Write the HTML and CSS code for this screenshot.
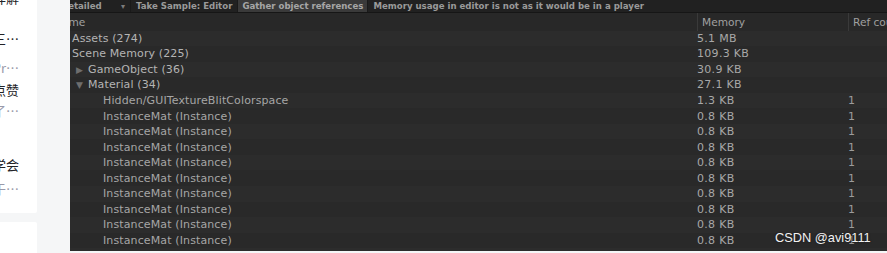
FILE: index.html
```html
<!DOCTYPE html>
<html lang="zh">
<head>
    <meta charset="UTF-8">
    <title>Memory Profiler</title>
    <link rel="stylesheet" href="styles.css">
</head>
<body>
<div class="side">
    <div class="card">
        <div class="line title top">Unity 内存分析 详解</div>
        <div class="line title l1">Profiler 使用方法三…</div>
        <div class="line desc l2">Unity Memory Pr…</div>
        <div class="line title l3">阅读 1204 点赞</div>
        <div class="line desc l4">材料实例化导致了…</div>
        <div class="line title l5">推荐相关内容 学会</div>
        <div class="line desc l6">如何减少材质实例对于…</div>
    </div>
    <div class="card bottom"></div>
</div>
<div class="panel">
    <div class="toolbar">
        <div class="tool dropdown">Detailed <span class="caret">▾</span></div>
        <div class="tool">Take Sample: Editor</div>
        <div class="tool active">Gather object references</div>
        <div class="tool note">Memory usage in editor is not as it would be in a player</div>
    </div>
    <div class="head">
        <div class="col name"><span class="cut">Name</span></div>
        <div class="col mem">Memory</div>
        <div class="col ref">Ref count</div>
    </div>
    <div class="rows">
        <div class="row"><div class="col name lv0">Assets (274)</div><div class="col mem">5.1 MB</div><div class="col ref"></div></div>
        <div class="row"><div class="col name lv0">Scene Memory (225)</div><div class="col mem">109.3 KB</div><div class="col ref"></div></div>
        <div class="row"><div class="col name lv1"><span class="arrow">▶</span>GameObject (36)</div><div class="col mem">30.9 KB</div><div class="col ref"></div></div>
        <div class="row"><div class="col name lv1"><span class="arrow">▼</span>Material (34)</div><div class="col mem">27.1 KB</div><div class="col ref"></div></div>
        <div class="row"><div class="col name lv2">Hidden/GUITextureBlitColorspace</div><div class="col mem">1.3 KB</div><div class="col ref">1</div></div>
        <div class="row"><div class="col name lv2">InstanceMat (Instance)</div><div class="col mem">0.8 KB</div><div class="col ref">1</div></div>
        <div class="row"><div class="col name lv2">InstanceMat (Instance)</div><div class="col mem">0.8 KB</div><div class="col ref">1</div></div>
        <div class="row"><div class="col name lv2">InstanceMat (Instance)</div><div class="col mem">0.8 KB</div><div class="col ref">1</div></div>
        <div class="row"><div class="col name lv2">InstanceMat (Instance)</div><div class="col mem">0.8 KB</div><div class="col ref">1</div></div>
        <div class="row"><div class="col name lv2">InstanceMat (Instance)</div><div class="col mem">0.8 KB</div><div class="col ref">1</div></div>
        <div class="row"><div class="col name lv2">InstanceMat (Instance)</div><div class="col mem">0.8 KB</div><div class="col ref">1</div></div>
        <div class="row"><div class="col name lv2">InstanceMat (Instance)</div><div class="col mem">0.8 KB</div><div class="col ref">1</div></div>
        <div class="row"><div class="col name lv2">InstanceMat (Instance)</div><div class="col mem">0.8 KB</div><div class="col ref">1</div></div>
        <div class="row"><div class="col name lv2">InstanceMat (Instance)</div><div class="col mem">0.8 KB</div><div class="col ref">1</div></div>
        <div class="row"><div class="col name lv2">InstanceMat (Instance)</div><div class="col mem">0.8 KB</div><div class="col ref">1</div></div>
    </div>
    <div class="watermark">CSDN @avi9111</div>
</div>
</body>
</html>
```

FILE: styles.css
```css
* {
    box-sizing: border-box;
}

html, body {
    margin: 0;
    padding: 0;
}

body {
    display: flex;
    height: 253px;
    overflow: hidden;
    background: #f5f6f7;
    font-family: "DejaVu Sans", "Noto Sans", sans-serif;
}

/* left: clipped blog sidebar */
.side {
    width: 37px;
    margin-right: 33px;
    display: flex;
    flex-flow: column nowrap;
    gap: 9px;
}

.card {
    height: 213px;
    background: #fff;
    border-radius: 0 0 2px 0;
    overflow: hidden;
}

.card.bottom {
    flex: 1;
    border-radius: 0 2px 0 0;
}

.line {
    display: flex;
    justify-content: flex-end;
    white-space: nowrap;
    overflow: hidden;
    height: 16px;
    padding-right: 18px;
    line-height: 16px;
    font-family: "Noto Sans CJK SC", "Liberation Sans", sans-serif;
    font-size: 13px;
}

.line.title {
    color: #222226;
}

.line.desc {
    color: #999aaa;
}

.top { margin-top: -10px; }
.l1 { margin-top: 25px; }
.l2 { margin-top: 13px; }
.l3 { margin-top: 6px; }
.l4 { margin-top: 5px; }
.l5 { margin-top: 38px; }
.l6 { margin-top: 8px; }

/* right: unity memory profiler */
.panel {
    width: 817px;
    height: 251px;
    background: #282828;
    overflow: hidden;
    position: relative;
    color: #b0b0b0;
}

.toolbar {
    display: flex;
    align-items: stretch;
    height: 13px;
    background: #212121;
    border-bottom: 1px solid #161616;
    font-size: 8.6px;
    font-weight: bold;
    color: #9a9a9a;
}

.tool {
    display: flex;
    align-items: center;
    padding: 0 5px;
    border-right: 1px solid #1a1a1a;
    white-space: nowrap;
}

.tool.dropdown {
    width: 75px;
    margin-left: -14px;
    justify-content: space-between;
}

.caret {
    font-size: 8px;
    color: #7c7c7c;
}

.tool.active {
    padding: 0 4px;
    background: #3a3a3a;
    color: #a6a6a6;
}

.tool.note {
    border-right: none;
}

.head {
    display: flex;
    height: 17.5px;
    align-items: stretch;
    background: #282828;
    font-size: 10.6px;
    color: #a0a0a0;
}

.head .col {
    display: flex;
    align-items: center;
}

.head .mem,
.head .ref {
    border-left: 1px solid #3a3a3a;
    padding-left: 4px;
}

.cut {
    margin-left: -16px;
}

.col {
    white-space: nowrap;
    overflow: hidden;
}

.col.name {
    width: 627px;
}

.col.mem {
    width: 151px;
}

.col.ref {
    flex: 1;
}

.rows {
    display: flex;
    flex-flow: column nowrap;
}

.row {
    display: flex;
    align-items: center;
    height: 15.55px;
    font-size: 11px;
    letter-spacing: 0.12px;
}

.row:nth-child(odd) {
    background: #2c2c2c;
}

.row:nth-child(even) {
    background: #292929;
}

.row .mem {
    color: #a8a8a8;
    letter-spacing: 0.3px;
}

.row .ref {
    color: #9c9c9c;
}

.lv0 {
    padding-left: 2px;
    color: #b4b4b4;
}

.lv1 {
    padding-left: 6px;
    color: #b4b4b4;
}

.lv2 {
    padding-left: 33px;
    color: #a6a6a6;
}

.arrow {
    display: inline-block;
    width: 12px;
    font-size: 9px;
    color: #6e6e6e;
}

.watermark {
    position: absolute;
    left: 705px;
    top: 230px;
    font-family: "Liberation Sans", sans-serif;
    font-size: 12.8px;
    color: #f2f2f2;
    text-shadow: 0 0 2px #222, 0 0 1px #222;
}
```
